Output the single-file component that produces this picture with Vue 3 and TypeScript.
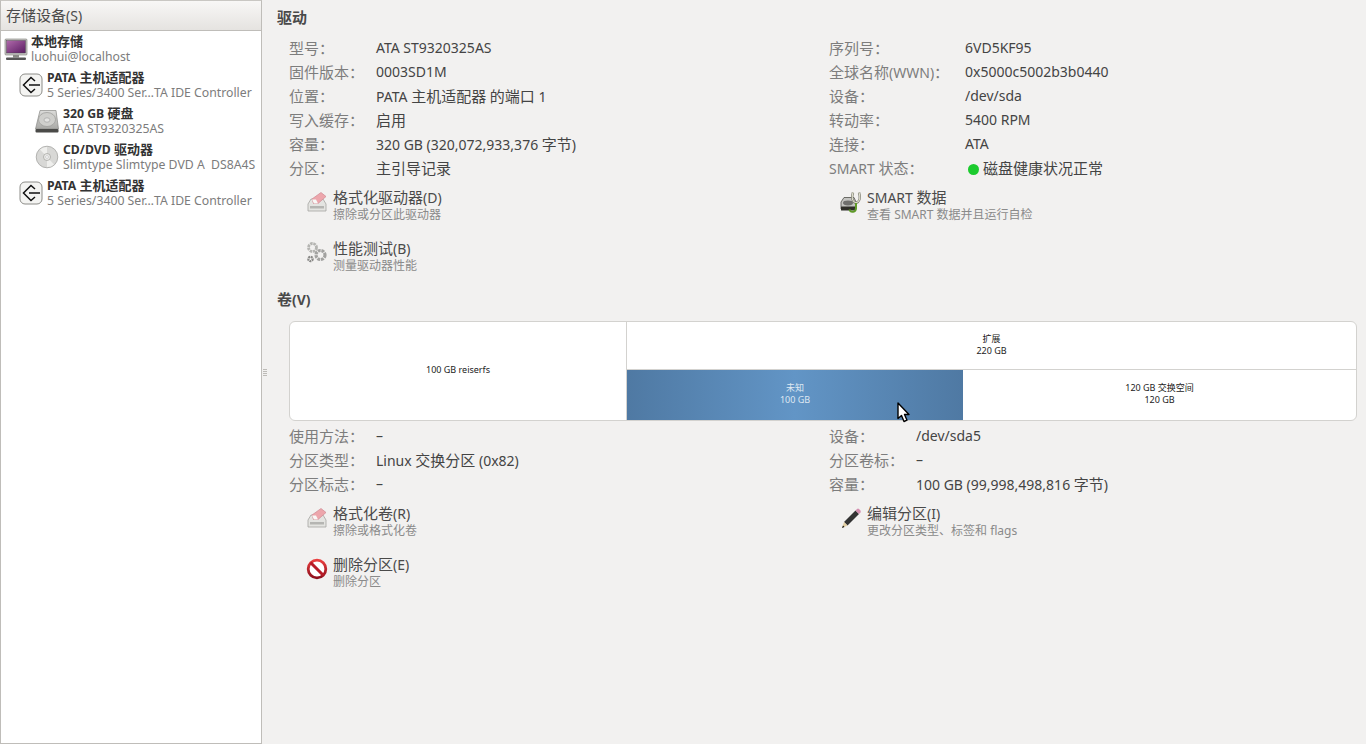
<script setup lang="ts">
import { h } from 'vue'

interface Row { label: string; value: string; dot?: boolean }

const cjkRun = /[\u3000-\u9fff\uff00-\uffef]+|[^\u3000-\u9fff\uff00-\uffef]+/g
const isCjk = /^[\u3000-\u9fff\uff00-\uffef]/

// The reference's CJK fallback runs larger than its Latin face, so each script gets its own size.
const T = (props: { s: string }) =>
  (props.s.match(cjkRun) ?? []).map((run) =>
    h('span', { class: isCjk.test(run) ? 'cjk-run' : undefined }, run),
  )
T.props = ['s']

const driveLeft: Row[] = [
  { label: '型号：', value: 'ATA ST9320325AS' },
  { label: '固件版本：', value: '0003SD1M' },
  { label: '位置：', value: 'PATA 主机适配器 的端口 1' },
  { label: '写入缓存：', value: '启用' },
  { label: '容量：', value: '320 GB (320,072,933,376 字节)' },
  { label: '分区：', value: '主引导记录' },
]
const driveRight: Row[] = [
  { label: '序列号：', value: '6VD5KF95' },
  { label: '全球名称(WWN)：', value: '0x5000c5002b3b0440' },
  { label: '设备：', value: '/dev/sda' },
  { label: '转动率：', value: '5400 RPM' },
  { label: '连接：', value: 'ATA' },
  { label: 'SMART 状态：', value: '磁盘健康状况正常', dot: true },
]
const volLeft: Row[] = [
  { label: '使用方法：', value: '–' },
  { label: '分区类型：', value: 'Linux 交换分区 (0x82)' },
  { label: '分区标志：', value: '–' },
]
const volRight: Row[] = [
  { label: '设备：', value: '/dev/sda5' },
  { label: '分区卷标：', value: '–' },
  { label: '容量：', value: '100 GB (99,998,498,816 字节)' },
]
</script>

<template>
  <div class="app">
    <aside class="side">
      <div class="side-head"><T s="存储设备(S)" /></div>
      <div class="tree">
        <div class="node lv0">
          <svg class="ic" width="24" height="24" viewBox="0 0 24 24">
            <defs><linearGradient id="scr" x1="0" y1="0" x2="1" y2="1"><stop offset="0" stop-color="#b06aab"/><stop offset="1" stop-color="#5a1c62"/></linearGradient></defs>
            <rect x="1" y="2" width="22" height="16" rx="1" fill="#c9c9c7" stroke="#77776f" stroke-width=".6"/>
            <rect x="2.500" y="3.500" width="19" height="12.500" fill="url(#scr)" stroke="#444" stroke-width=".4"/>
            <rect x="9" y="18" width="6" height="2.500" fill="#8a8a86"/>
            <rect x="2" y="20.500" width="20" height="2.500" rx="1" fill="#555"/>
          </svg>
          <div class="txt"><b><T s="本地存储" /></b><span>luohui@localhost</span></div>
        </div>
        <div class="node lv1">
          <svg class="ic" width="24" height="24" viewBox="0 0 24 24">
            <rect x="1" y="1" width="22" height="22" rx="5" fill="#f4f4f2" stroke="#8c8c88"/>
            <path d="M16 8 L12 4.500 L4.500 12 L12 19.500 L16 16" fill="none" stroke="#111" stroke-width="1.500"/>
            <path d="M10 12 H21" stroke="#111" stroke-width="1.500"/>
          </svg>
          <div class="txt"><b><T s="PATA 主机适配器" /></b><span>5 Series/3400 Ser…TA IDE Controller</span></div>
        </div>
        <div class="node lv2">
          <svg class="ic" width="24" height="24" viewBox="0 0 24 24">
            <defs><linearGradient id="hdd" x1="0" y1="0" x2="0" y2="1"><stop offset="0" stop-color="#dcdcda"/><stop offset="1" stop-color="#a9a9a6"/></linearGradient></defs>
            <path d="M5 1.500 H21 L23.500 20 H.500 Z" fill="url(#hdd)" stroke="#8a8a86" stroke-width=".7"/>
            <ellipse cx="12" cy="10.500" rx="8.500" ry="7" fill="#cfcfcc" stroke="#9a9a96" stroke-width=".7"/>
            <ellipse cx="12" cy="11" rx="3" ry="2.200" fill="#e4e4e2" stroke="#999" stroke-width=".6"/>
            <rect x=".5" y="20" width="23" height="3.500" rx="1" fill="#4a4a48"/>
          </svg>
          <div class="txt"><b><T s="320 GB 硬盘" /></b><span>ATA ST9320325AS</span></div>
        </div>
        <div class="node lv2">
          <svg class="ic" width="24" height="24" viewBox="0 0 24 24">
            <circle cx="12" cy="12" r="10.800" fill="#d8d8d6" stroke="#a6a6a3" stroke-width=".8"/>
            <path d="M12 12 L5 4.500 A10 10 0 0 1 12 2 Z" fill="#efefed"/>
            <path d="M12 12 L19 19.500 A10 10 0 0 1 12 22 Z" fill="#efefed"/>
            <circle cx="12" cy="12" r="3.500" fill="#ececea" stroke="#9d9d9a" stroke-width=".7"/>
            <circle cx="12" cy="12" r="1.400" fill="#fff" stroke="#aaa" stroke-width=".5"/>
          </svg>
          <div class="txt"><b><T s="CD/DVD 驱动器" /></b><span>Slimtype Slimtype DVD A&nbsp; DS8A4S</span></div>
        </div>
        <div class="node lv1">
          <svg class="ic" width="24" height="24" viewBox="0 0 24 24">
            <rect x="1" y="1" width="22" height="22" rx="5" fill="#f4f4f2" stroke="#8c8c88"/>
            <path d="M16 8 L12 4.500 L4.500 12 L12 19.500 L16 16" fill="none" stroke="#111" stroke-width="1.500"/>
            <path d="M10 12 H21" stroke="#111" stroke-width="1.500"/>
          </svg>
          <div class="txt"><b><T s="PATA 主机适配器" /></b><span>5 Series/3400 Ser…TA IDE Controller</span></div>
        </div>
      </div>
    </aside>

    <div class="grip"><i></i><i></i><i></i><i></i></div>

    <main class="main">
      <h2 class="h"><T s="驱动" /></h2>
      <div class="cols info">
        <div class="props drive-l">
          <template v-for="r in driveLeft" :key="r.label">
            <div class="k"><T :s="r.label" /></div><div class="v"><T :s="r.value" /></div>
          </template>
        </div>
        <div class="props drive-r">
          <template v-for="r in driveRight" :key="r.label">
            <div class="k"><T :s="r.label" /></div>
            <div class="v"><i v-if="r.dot" class="dot"></i><T :s="r.value" /></div>
          </template>
        </div>
      </div>

      <div class="cols actions">
        <div class="acol">
          <div class="act">
            <svg class="ai" width="22" height="22" viewBox="0 0 22 22">
              <path d="M2 13 L5 8 H17 L20 13 V20 H2 Z" fill="#e4e4e1" stroke="#a5a5a1" stroke-width=".8"/>
              <rect x="4" y="15" width="14" height="2.500" fill="#b5b5b2"/>
              <path d="M6 8 L15 1.500 L20 5.500 L12 12.500 H7.500 Z" fill="#eda6ac" stroke="#cf8a92" stroke-width=".7"/>
              <path d="M6 8.500 L8 12.500 H12 L10 8.500 Z" fill="#f8f8f6"/>
            </svg>
            <div class="at"><div class="t"><T s="格式化驱动器(D)" /></div><div class="s"><T s="擦除或分区此驱动器" /></div></div>
          </div>
          <div class="act">
            <svg class="ai" width="22" height="22" viewBox="0 0 22 22">
              <g fill="none">
                <circle cx="6.500" cy="5.500" r="4" stroke="#b4b4b1" stroke-width="2.800" stroke-dasharray="2.500 .7"/>
                <circle cx="14.500" cy="13" r="4.500" stroke="#a2a2a0" stroke-width="3.200" stroke-dasharray="2.800 .8"/>
                <circle cx="4.500" cy="17" r="2.200" stroke="#8a8a88" stroke-width="2.200" stroke-dasharray="1.800 .6"/>
              </g>
            </svg>
            <div class="at"><div class="t"><T s="性能测试(B)" /></div><div class="s"><T s="测量驱动器性能" /></div></div>
          </div>
        </div>
        <div class="acol">
          <div class="act">
            <svg class="ai" width="22" height="22" viewBox="0 0 22 22">
              <path d="M1 11 L4 6.500 H14 L16 11 V18 H1 Z" fill="#c4c4c1" stroke="#4f4f4a" stroke-width=".8"/>
              <ellipse cx="8" cy="12" rx="5" ry="2.400" fill="#6f6f6d"/>
              <rect x="1" y="15.500" width="15" height="4" rx=".5" fill="#2f2f2a"/>
              <path d="M13 1.500 C11 7.500 13 11 16 12 C19 11 21 7.500 19 1.500" fill="none" stroke="#77776a" stroke-width="2.400"/>
              <path d="M13 1.500 C11 7.500 13 11 16 12 C19 11 21 7.500 19 1.500" fill="none" stroke="#e2e2d0" stroke-width="1.200"/>
              <path d="M16 12 V17 C16 21.500 10.500 22 9.500 18.500" fill="none" stroke="#5f9a28" stroke-width="2"/>
            </svg>
            <div class="at"><div class="t"><T s="SMART 数据" /></div><div class="s"><T s="查看 SMART 数据并且运行自检" /></div></div>
          </div>
        </div>
      </div>

      <h2 class="h vol-h"><T s="卷(V)" /></h2>
      <div class="bar">
        <div class="part p-left"><span>100 GB reiserfs</span></div>
        <div class="ext">
          <div class="part ext-top"><span>扩展</span><span>220 GB</span></div>
          <div class="ext-bottom">
            <div class="part sel"><span>未知</span><span>100 GB</span></div>
            <div class="part swap"><span>120 GB 交换空间</span><span>120 GB</span></div>
          </div>
        </div>
      </div>

      <div class="cols vol-props">
        <div class="props vol-l">
          <template v-for="r in volLeft" :key="r.label">
            <div class="k"><T :s="r.label" /></div><div class="v"><T :s="r.value" /></div>
          </template>
        </div>
        <div class="props vol-r">
          <template v-for="r in volRight" :key="r.label">
            <div class="k"><T :s="r.label" /></div><div class="v"><T :s="r.value" /></div>
          </template>
        </div>
      </div>

      <div class="cols actions">
        <div class="acol">
          <div class="act">
            <svg class="ai" width="22" height="22" viewBox="0 0 22 22">
              <path d="M2 13 L5 8 H17 L20 13 V20 H2 Z" fill="#e4e4e1" stroke="#a5a5a1" stroke-width=".8"/>
              <rect x="4" y="15" width="14" height="2.500" fill="#b5b5b2"/>
              <path d="M6 8 L15 1.500 L20 5.500 L12 12.500 H7.500 Z" fill="#eda6ac" stroke="#cf8a92" stroke-width=".7"/>
              <path d="M6 8.500 L8 12.500 H12 L10 8.500 Z" fill="#f8f8f6"/>
            </svg>
            <div class="at"><div class="t"><T s="格式化卷(R)" /></div><div class="s"><T s="擦除或格式化卷" /></div></div>
          </div>
          <div class="act">
            <svg class="ai" width="22" height="22" viewBox="0 0 22 22">
              <defs><linearGradient id="rd" x1="0" y1="0" x2="0" y2="1"><stop offset="0" stop-color="#ea3f3f"/><stop offset="1" stop-color="#8e0f1c"/></linearGradient></defs>
              <circle cx="11" cy="11" r="8.800" fill="#fff" stroke="url(#rd)" stroke-width="2.800"/>
              <path d="M4.500 4.500 L17.500 17.500" stroke="#b81c28" stroke-width="3"/>
            </svg>
            <div class="at"><div class="t"><T s="删除分区(E)" /></div><div class="s"><T s="删除分区" /></div></div>
          </div>
        </div>
        <div class="acol">
          <div class="act">
            <svg class="ai" width="22" height="22" viewBox="0 0 22 22">
              <path d="M4 15 L15.500 3.500 L19 7 L7.500 18.500 Z" fill="#333"/>
              <path d="M15.500 3.500 L17 2 Q18 1 19 2 L20.500 3.500 Q21 4.500 20.500 5.500 L19 7 Z" fill="#d48fb0"/>
              <path d="M4 15 L7.500 18.500 L2 21 Z" fill="#e3cfa2"/>
              <path d="M2 21 L3 18.500 L4.500 20 Z" fill="#111"/>
            </svg>
            <div class="at"><div class="t"><T s="编辑分区(I)" /></div><div class="s"><T s="更改分区类型、标签和 flags" /></div></div>
          </div>
        </div>
      </div>
    </main>

    <svg class="cursor" width="14" height="21" viewBox="0 0 14 21">
      <path d="M1 1 V16.500 L4.500 13.500 L7 19.500 L10 18.200 L7.500 12.500 H12 Z" fill="#fff" stroke="#000" stroke-width="1.400" stroke-linejoin="round"/>
    </svg>
  </div>
</template>

<style>
html, body { margin: 0; padding: 0; background: #f2f1f0; }
.cjk-run { font-size: var(--cjk, 15px); }
</style>

<style scoped>
.app {
  --cjk: 15px;
  position: relative;
  display: flex;
  width: 1366px;
  height: 744px;
  overflow: hidden;
  background: #f2f1f0;
  color: #3c3c3c;
  font-family: "Noto Sans", "Noto Sans CJK SC", sans-serif;
  font-size: 14px;
}
.side {
  box-sizing: border-box;
  width: 262px;
  height: 744px;
  flex: none;
  background: #fff;
  border: 1px solid #bfbdb9;
  border-top-color: #c9c7c3;
}
.side-head {
  box-sizing: border-box;
  height: 30px;
  padding: 0 0 0 5px;
  line-height: 29px;
  color: #4b4b4b;
  background: linear-gradient(#f8f7f6, #e5e3e0);
  border-bottom: 1px solid #bfbdb9;
}
.tree { display: flex; flex-direction: column; }
.node { display: flex; align-items: center; height: 36px; }
.lv0 { padding-left: 3px; gap: 3px; }
.lv1 { padding-left: 18px; gap: 4px; }
.lv2 { padding-left: 34px; gap: 4px; }
.ic { flex: none; }
.txt {
  --cjk: 13px;
  display: flex;
  flex-direction: column;
  font-size: 12.250px;
  line-height: 15px;
  white-space: nowrap;
}
.txt b { color: #333; font-weight: 700; }
.txt span { color: #7c7c7c; }
.txt b :deep(span) { color: #333; }
.grip {
  width: 5px;
  flex: none;
  display: flex;
  flex-direction: column;
  justify-content: center;
  gap: 1px;
  padding-left: 1px;
  box-sizing: content-box;
}
.grip i { display: block; width: 4px; height: 1px; background: #bdbbb7; }
.main { flex: 1; padding: 0 9px; min-width: 0; }
.h { margin: 0; font-size: 14px; font-weight: 700; line-height: 20px; color: #4a4a4a; padding-top: 7px; }
.cols { display: flex; padding-left: 12px; }
.cols > * { flex: none; width: 540px; }
.props { display: grid; grid-auto-rows: 24px; align-items: center; padding-top: 7px; }
.k { color: #7d7d7d; white-space: nowrap; }
.v { color: #444; white-space: nowrap; }
.drive-l { grid-template-columns: 87px 1fr; }
.drive-r { grid-template-columns: 136px 1fr; }
.vol-l { grid-template-columns: 87px 1fr; }
.vol-r { grid-template-columns: 87px 1fr; }
.dot {
  display: inline-block;
  width: 11px;
  height: 11px;
  margin: 0 4px 0 3px;
  border-radius: 50%;
  background: #1ccb2e;
  vertical-align: -1px;
}
.actions { padding-left: 29px; margin-top: 9px; }
.actions > * { width: 534px; }
.acol { display: flex; flex-direction: column; gap: 11px; }
.act { display: flex; align-items: flex-start; gap: 5px; height: 40px; }
.ai { flex: none; margin-top: 3px; width: 22px; height: 22px; }
.t { color: #4a4a4a; font-size: 14px; line-height: 18px; }
.s { --cjk: 12px; color: #8a8a8a; font-size: 12px; line-height: 15px; }
.vol-h { padding-top: 2px; margin-top: 8px; }
.bar {
  display: flex;
  box-sizing: border-box;
  width: 1068px;
  height: 100px;
  margin: 11px 0 0 12px;
  background: #fff;
  border: 1px solid #d3d2cf;
  border-radius: 6px;
  overflow: hidden;
}
.part {
  display: flex;
  flex-direction: column;
  align-items: center;
  justify-content: center;
  padding-bottom: 2px;
  box-sizing: border-box;
  font-size: 9px;
  line-height: 12px;
  color: #222;
}
.p-left { width: 337px; flex: none; border-right: 1px solid #d3d2cf; }
.ext { flex: 1; display: flex; flex-direction: column; min-width: 0; }
.ext-top { height: 48px; flex: none; border-bottom: 1px solid #d3d2cf; }
.ext-bottom { flex: 1; display: flex; }
.sel {
  width: 336px;
  flex: none;
  color: #dfe8f2;
  background: linear-gradient(90deg, #4f79a3, #6295c6 50%, #4f79a3);
}
.swap { flex: 1; }
.vol-props .props { padding-top: 2px; }
.cursor { position: absolute; left: 897px; top: 402px; }
</style>
